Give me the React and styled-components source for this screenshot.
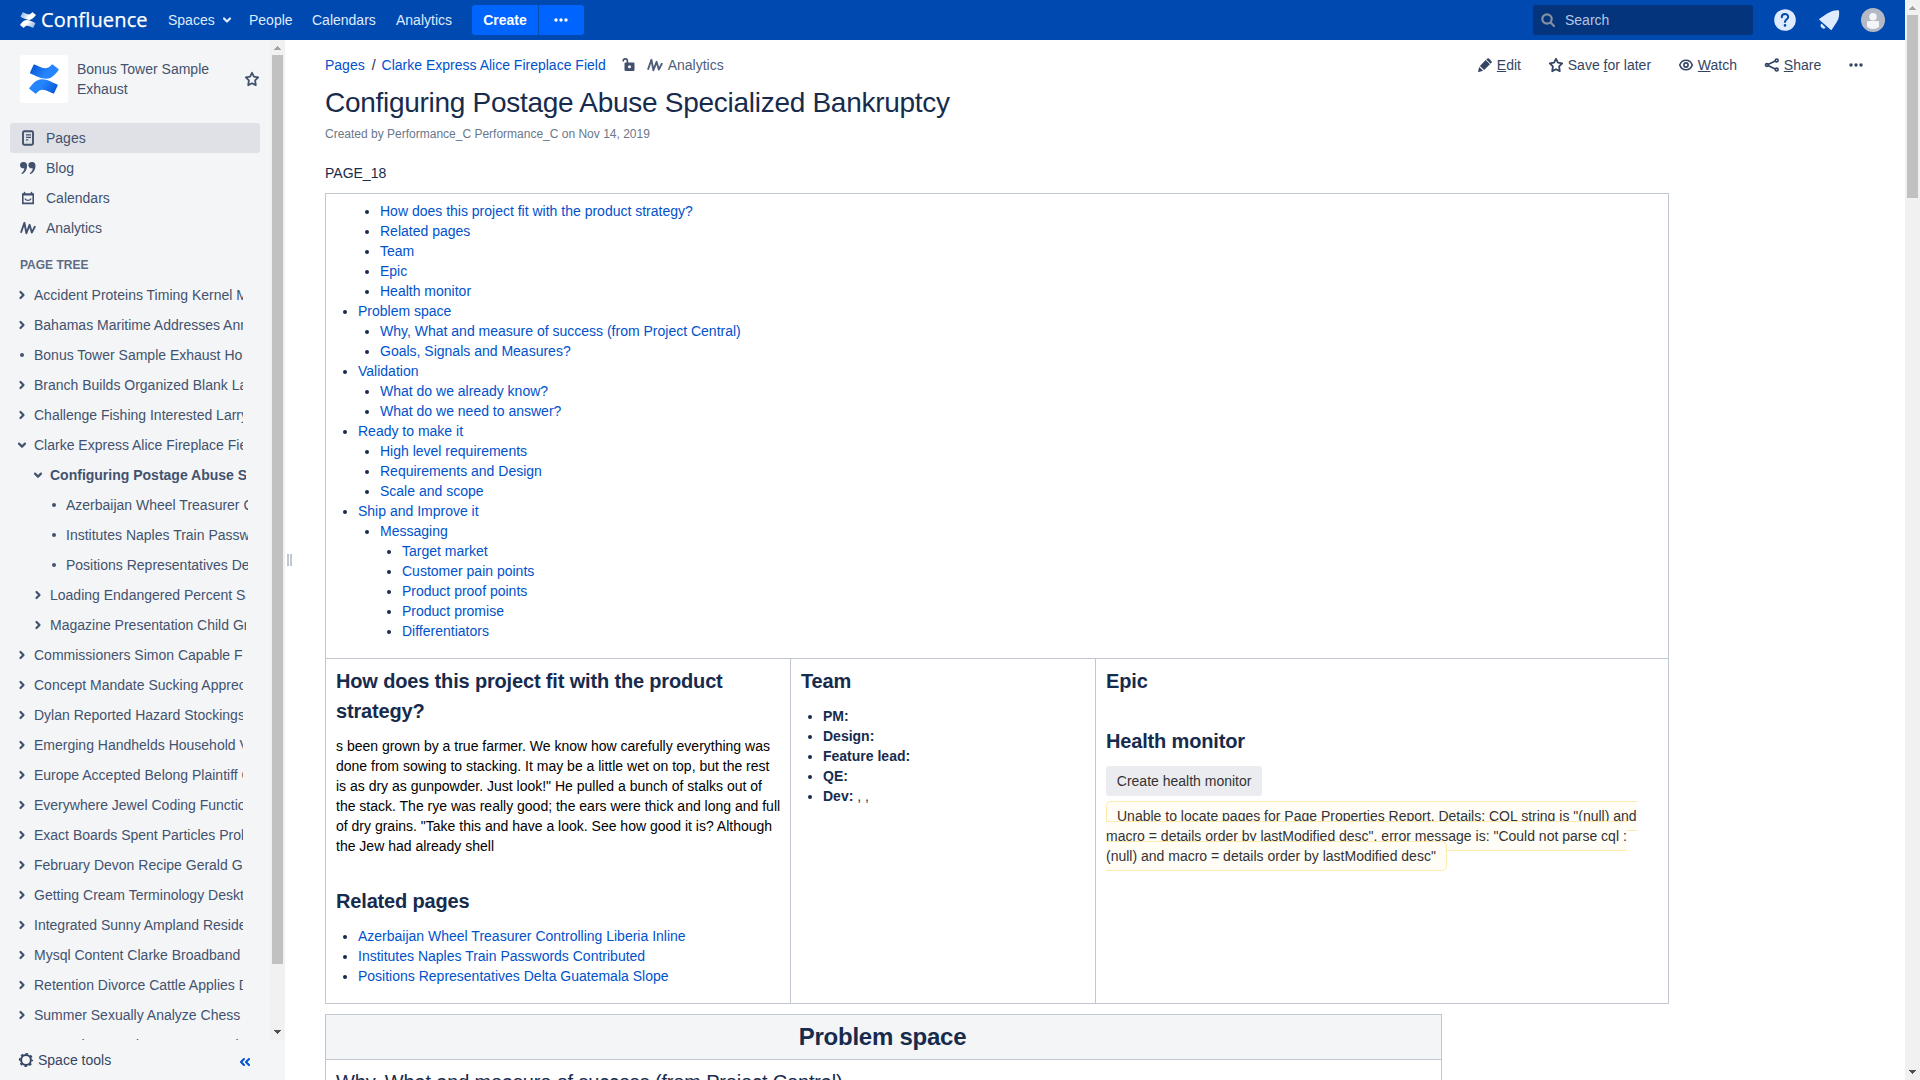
import React from "react";
import styled, { createGlobalStyle, css } from "styled-components";

const Global = createGlobalStyle`
  * { box-sizing: border-box; }
  html, body { margin: 0; padding: 0; height: 100%; overflow: hidden; background: #fff; }
  body {
    font-family: "Liberation Sans", Arial, sans-serif;
    font-size: 14px;
    line-height: 20px;
    color: #172b4d;
  }
  a { color: #0052cc; text-decoration: none; }
  svg { display: block; flex: none; }
`;

const Page = styled.div`
  display: flex;
  width: 1920px;
  height: 1080px;
  overflow: hidden;
`;
const Window = styled.div`
  display: flex;
  flex-direction: column;
  width: 1905px;
  height: 1080px;
`;

/* Scrollbars */
const Track = styled.div`
  flex: none;
  display: flex;
  flex-direction: column;
  align-items: center;
  width: 15px;
  height: 100%;
  background: #f1f1f1;
`;
const Thumb = styled.div`
  width: 11px;
  height: ${(p) => p.$size}px;
  background: #c1c1c1;
`;
const ArrowCell = styled.div`
  flex: none;
  width: 15px;
  height: 15px;
  margin-top: ${(p) => (p.$end ? "auto" : 0)};
`;

function Scrollbar({ size }) {
  return (
    <Track>
      <ArrowCell>
        <svg width="15" height="15"><path d="M4 10h7v-1h-1V8H9V7H8V6H7v1H6v1H5v1H4z" fill="#a3a3a3" /></svg>
      </ArrowCell>
      <Thumb $size={size} />
      <ArrowCell $end>
        <svg width="15" height="15"><path d="M4 5h7v1h-1v1H9v1H8v1H7V8H6V7H5V6H4z" fill="#505050" /></svg>
      </ArrowCell>
    </Track>
  );
}

/* Header */
const Header = styled.header`
  flex: none;
  display: flex;
  align-items: center;
  height: 40px;
  padding: 0 20px;
  background: #0049b0;
  color: #deebff;
`;
const Brand = styled.div`
  display: flex;
  align-items: center;
  gap: 5px;
  width: 148px;
  font: 400 20px/40px "Open Sans", "Noto Sans", sans-serif;
  letter-spacing: 0.15px;
  -webkit-text-stroke: 0.25px #fff;
  color: #fff;
`;
const NavLink = styled.div`
  display: flex;
  align-items: center;
  gap: 7px;
  width: ${(p) => p.$w}px;
`;
const ButtonGroup = styled.div`
  display: flex;
  gap: 1px;
  margin-right: auto;
`;
const PrimaryButton = styled.button`
  display: flex;
  align-items: center;
  justify-content: center;
  width: ${(p) => p.$w}px;
  height: 30px;
  padding: 0 ${(p) => (p.$last ? 2 : 0)}px 0 0;
  border: 0;
  border-radius: ${(p) => (p.$last ? "0 3px 3px 0" : "3px 0 0 3px")};
  background: #0065ff;
  color: #fff;
  font: bold 14px/20px "Liberation Sans", Arial, sans-serif;
`;
const Search = styled.div`
  display: flex;
  align-items: center;
  gap: 9px;
  width: 220px;
  height: 30px;
  padding: 0 7px;
  border-radius: 3px;
  background: #04347c;
  color: #b5c7e3;
`;
const HeaderIcons = styled.div`
  display: flex;
  align-items: center;
  gap: 20px;
  margin-left: 20px;
`;

/* Sidebar */
const Body = styled.div`
  flex: 1;
  display: flex;
  min-height: 0;
`;
const Sidebar = styled.aside`
  flex: none;
  display: flex;
  flex-direction: column;
  width: 285px;
  background: #f4f5f7;
  color: #42526e;
`;
const SideScroll = styled.div`
  flex: none;
  display: flex;
  height: 1000px;
  overflow: hidden;
`;
const SideContent = styled.div`
  width: 270px;
  height: 1000px;
  overflow: hidden;
`;
const SpaceHead = styled.div`
  display: flex;
  align-items: center;
  height: 48px;
  margin: 15px 0 20px 20px;
`;
const SpaceLogo = styled.div`
  display: flex;
  align-items: center;
  justify-content: center;
  width: 48px;
  height: 48px;
  margin-right: 9px;
  border-radius: 3px;
  background: #fff;
`;
const SpaceName = styled.div`
  width: 167px;
  padding-right: 20px;
`;
const SideItem = styled.div`
  display: flex;
  align-items: center;
  gap: 10px;
  width: 250px;
  height: 30px;
  margin-left: 10px;
  padding-left: 10px;
  border-radius: 3px;
  background: ${(p) => (p.$active ? "#dfe1e6" : "transparent")};
`;
const TreeTitle = styled.div`
  height: 20px;
  margin: 12px 0 5px 20px;
  font-size: 12px;
  font-weight: bold;
  color: #5e6c84;
`;
const TreeRow = styled.div`
  display: flex;
  align-items: center;
  gap: 4px;
  height: 30px;
  padding-left: ${(p) => 14 + p.$level * 16}px;
`;
const TreeLabel = styled.div`
  width: ${(p) => [209, 195.5, 182][p.$level]}px;
  overflow: hidden;
  white-space: nowrap;
  font-weight: ${(p) => (p.$bold ? "bold" : "normal")};
`;
const SideFooter = styled.div`
  display: flex;
  align-items: center;
  gap: 4px;
  height: 40px;
  padding: 0 34px 0 18px;
  color: #344563;
`;
const FooterLabel = styled.span`
  flex: 1;
`;
const Resizer = styled.div`
  display: flex;
  align-items: center;
  gap: 1px;
  width: 10px;
  padding-left: 2px;
`;
const Grip = styled.span`
  width: 2px;
  height: 12px;
  background: #c1c7d0;
`;

/* Content */
const Main = styled.main`
  flex: 1;
  min-width: 0;
  overflow: hidden;
  padding: 15px 41px 0 30px;
`;
const Toolbar = styled.div`
  display: flex;
  align-items: center;
  height: 20px;
`;
const Crumb = styled.a`
  margin-right: 7px;
`;
const Slash = styled.span`
  margin-right: 6px;
`;
const Meta = styled.span`
  display: flex;
  align-items: center;
  gap: 5px;
  margin-left: ${(p) => p.$ml}px;
  color: #505f79;
`;
const Actions = styled.div`
  display: flex;
  gap: 26.8px;
  margin-left: auto;
  color: #344563;
`;
const Action = styled.div`
  display: flex;
  align-items: center;
  gap: 4px;
`;
const Title = styled.h1`
  margin: 10px 0 0;
  height: 35px;
  font-size: 28px;
  font-weight: normal;
  line-height: 35px;
  letter-spacing: -0.01em;
`;
const Byline = styled.div`
  margin: 4px 0 19px;
  font-size: 12px;
  line-height: 20px;
  color: #6b778c;
`;
const Para = styled.p`
  margin: 0 0 10px;
  color: ${(p) => p.$color || "inherit"};
`;
const cell = css`
  padding: 7px 8px 7px 10px;
  border: 1px solid #c1c7d0;
  vertical-align: top;
  text-align: left;
`;
const Table = styled.table`
  width: ${(p) => p.$w}px;
  margin-bottom: 10px;
  border-collapse: collapse;
  table-layout: fixed;
`;
const Td = styled.td`
  ${cell}
`;
const Th = styled.th`
  ${cell}
  padding-right: 10px;
  background: #f4f5f7;
  text-align: center;
`;
const List = styled.ul`
  margin: 0 0 ${(p) => (p.$nested ? 0 : 10)}px;
  padding-left: 22px;
  list-style: disc;
`;
const Bare = styled.li`
  list-style: none;
`;
const H2 = styled.h2`
  margin: ${(p) => p.$mt || 0}px 0 10px;
  font-size: 20px;
  line-height: 30px;
  letter-spacing: -0.008em;
  font-weight: ${(p) => (p.$light ? "normal" : "bold")};
`;
const H1 = styled.h2`
  margin: 0 2px 0 0;
  font-size: 24px;
  line-height: 30px;
  letter-spacing: -0.01em;
  font-weight: bold;
`;
const GreyButton = styled.button`
  display: block;
  height: 30px;
  padding: 0 10.8px;
  margin-bottom: 10px;
  border: 0;
  border-radius: 3px;
  background: #ebecf0;
  color: #333;
  font: 14px/20px "Liberation Sans", Arial, sans-serif;
`;
const ErrorText = styled.span`
  padding: 6px 10px;
  border: 1px solid #ffeaae;
  border-radius: 5px;
  background: #fffdf6;
  color: #333;
`;

/* Icons */
const Mark = ({ size, id, a, b }) => (
  <svg width={size} height={size} viewBox="0 0 30 30">
    <defs>
      <linearGradient id={id + "t"} x1="0" y1="0" x2="1" y2="0.4">
        <stop offset="0" stopColor={a} /><stop offset="0.7" stopColor={b} />
      </linearGradient>
      <linearGradient id={id + "b"} x1="1" y1="1" x2="0" y2="0.6">
        <stop offset="0" stopColor={a} /><stop offset="0.7" stopColor={b} />
      </linearGradient>
    </defs>
    <path d="M4.6 0.8 L1 8.6 Q0.8 9.3 1.5 9.6 C7 12 11.5 14.8 17 14.8 C23.5 14.8 27 9 29.5 6.2 Q30 5.6 29.4 5.1 L23.7 0.6 Q23 0.2 22.5 0.8 C17.5 6.5 14.5 4.6 5.6 0.5 Q5 0.2 4.6 0.8Z" fill={`url(#${id}t)`} />
    <path d="M25.1 29.2 L28.7 21.4 Q28.9 20.7 28.2 20.4 C22.7 18 18.5 15.2 13 15.2 C6.5 15.2 2.7 21 0.4 24 Q0 24.6 0.6 25 L6.2 29.5 Q6.9 29.9 7.4 29.3 C12.2 23.5 15.2 25.4 24.1 29.5 Q24.7 29.8 25.1 29.2Z" fill={`url(#${id}b)`} />
  </svg>
);
const Stroke = ({ d, size = 16, w = 2, children }) => (
  <svg width={size} height={size} viewBox="0 0 16 16" fill="none" stroke="currentColor" strokeWidth={w} strokeLinecap="round" strokeLinejoin="round">
    {d && <path d={d} />}
    {children}
  </svg>
);
const Dots = () => (
  <svg width="16" height="16" viewBox="0 0 16 16" fill="currentColor">
    <circle cx="3" cy="8" r="1.7" /><circle cx="8" cy="8" r="1.7" /><circle cx="13" cy="8" r="1.7" />
  </svg>
);
const Star = () => <Stroke w={1.8} d="M8 1.8l1.9 3.9 4.3.6-3.1 3 .7 4.9L8 12.2l-3.8 2 .7-4.9-3.1-3 4.3-.6z" />;
const Wave = () => <Stroke w={1.9} d="M1.2 12L4.4 2.8 6.4 13.2 9.6 4.8 11.8 12.6 14.8 6.8" />;
const icons = {
  pages: (
    <Stroke w={1.9}>
      <rect x="3" y="1.2" width="10" height="13.6" rx="1.2" />
      <path d="M6 4.8h5M6 7.3h5M6 9.8h2.2" strokeWidth="1.3" strokeLinecap="butt" />
    </Stroke>
  ),
  blog: (
    <svg width="16" height="16" viewBox="0 0 16 16" fill="currentColor">
      <path d="M3.9 2a3.2 3.2 0 1 0-.4 6.3c.3 0 .5 0 .8-.1-.1 2-.9 3.4-2.6 4.7-.5.5.1 1.4.8 1C5.5 12.3 7.1 9.5 7.1 5.8 7.1 3.5 6 2 3.9 2z" />
      <path d="M12.3 2a3.2 3.2 0 1 0-.4 6.3c.3 0 .5 0 .8-.1-.1 2-.9 3.4-2.6 4.7-.5.5.1 1.4.8 1 3-1.6 4.6-4.4 4.6-8.1 0-2.3-1.1-3.8-3.2-3.8z" />
    </svg>
  ),
  calendars: (
    <Stroke w={1.6}>
      <path d="M2.8 4h10.4v9.4H2.8zM3 4.6h10" strokeLinejoin="miter" />
      <path d="M4.5 2.6v1.4M11.5 2.6v1.4" />
      <path d="M5.2 9c.8 1.9 4.8 1.9 5.6 0" strokeWidth="1.3" />
    </Stroke>
  ),
  analytics: <Wave />,
};
const Marker = ({ kind }) => (
  <Stroke w={2.2}>
    {kind === "open" && <path d="M5 6.6l3 3 3-3" />}
    {kind === "closed" && <path d="M6.5 5l3 3-3 3" />}
    {kind === "leaf" && <circle cx="8" cy="8" r="2" fill="currentColor" stroke="none" />}
  </Stroke>
);

const tree = [
  [0, "closed", "Accident Proteins Timing Kernel Methods"],
  [0, "closed", "Bahamas Maritime Addresses Annual"],
  [0, "leaf", "Bonus Tower Sample Exhaust Home"],
  [0, "closed", "Branch Builds Organized Blank Laser"],
  [0, "closed", "Challenge Fishing Interested Larry"],
  [0, "open", "Clarke Express Alice Fireplace Field"],
  [1, "open", "Configuring Postage Abuse Specialized", true],
  [2, "leaf", "Azerbaijan Wheel Treasurer Controlling"],
  [2, "leaf", "Institutes Naples Train Passwords"],
  [2, "leaf", "Positions Representatives Delta"],
  [1, "closed", "Loading Endangered Percent Sample"],
  [1, "closed", "Magazine Presentation Child Grade"],
  [0, "closed", "Commissioners Simon Capable Fuel"],
  [0, "closed", "Concept Mandate Sucking Appreciate"],
  [0, "closed", "Dylan Reported Hazard Stockings"],
  [0, "closed", "Emerging Handhelds Household Village"],
  [0, "closed", "Europe Accepted Belong Plaintiff Copy"],
  [0, "closed", "Everywhere Jewel Coding Functions"],
  [0, "closed", "Exact Boards Spent Particles Problem"],
  [0, "closed", "February Devon Recipe Gerald Gains"],
  [0, "closed", "Getting Cream Terminology Desktop"],
  [0, "closed", "Integrated Sunny Ampland Residence"],
  [0, "closed", "Mysql Content Clarke Broadband"],
  [0, "closed", "Retention Divorce Cattle Applies Data"],
  [0, "closed", "Summer Sexually Analyze Chess"],
  [0, "closed", "Sympathy Guard Consumers Pub"],
];

const toc = [
  [null, ["How does this project fit with the product strategy?", "Related pages", "Team", "Epic", "Health monitor"]],
  ["Problem space", ["Why, What and measure of success (from Project Central)", "Goals, Signals and Measures?"]],
  ["Validation", ["What do we already know?", "What do we need to answer?"]],
  ["Ready to make it", ["High level requirements", "Requirements and Design", "Scale and scope"]],
  ["Ship and Improve it", [["Messaging", ["Target market", "Customer pain points", "Product proof points", "Product promise", "Differentiators"]]]],
];

function TocItem({ node }) {
  const [label, kids] = Array.isArray(node) ? node : [node, null];
  const Li = label ? "li" : Bare;
  return (
    <Li>
      {label && <a>{label}</a>}
      {kids && (
        <List $nested>
          {kids.map((k, i) => <TocItem key={i} node={k} />)}
        </List>
      )}
    </Li>
  );
}

export default function App() {
  return (
    <>
      <Global />
      <Page>
        <Window>
          <Header>
            <Brand>
              <Mark size={16} id="h" a="#7fa6e0" b="#ffffff" />
              Confluence
            </Brand>
            <NavLink $w={81}>
              Spaces
              <svg width="10" height="8" viewBox="0 0 10 8" fill="none" stroke="currentColor" strokeWidth="2.2" strokeLinecap="round" strokeLinejoin="round"><path d="M2 2.5l3 3 3-3" /></svg>
            </NavLink>
            <NavLink $w={63}>People</NavLink>
            <NavLink $w={84}>Calendars</NavLink>
            <NavLink $w={76}>Analytics</NavLink>
            <ButtonGroup>
              <PrimaryButton $w={66}>Create</PrimaryButton>
              <PrimaryButton $w={45} $last><Dots /></PrimaryButton>
            </ButtonGroup>
            <Search>
              <svg width="16" height="16" viewBox="0 0 16 16" fill="none" stroke="#8590a2" strokeWidth="2.2" strokeLinecap="round"><circle cx="7" cy="7" r="4.7" /><path d="M10.8 10.8l3.2 3.2" /></svg>
              Search
            </Search>
            <HeaderIcons>
              <svg width="24" height="24" viewBox="0 0 24 24">
                <circle cx="12" cy="12" r="10.8" fill="#deebff" />
                <path d="M8.8 9.2c0-4.3 6.4-4.1 6.4-.3 0 2.4-3.2 2.5-3.2 5.2" fill="none" stroke="#0049b0" strokeWidth="2" strokeLinecap="round" />
                <circle cx="12" cy="17.4" r="1.3" fill="#0049b0" />
              </svg>
              <svg width="24" height="24" viewBox="0 0 24 24" fill="#deebff">
                <path d="M21.2 2.2c.6 0 .9.3.9.9.1 4 .2 7.5-2.5 11.1l-4.7 7.2c-.4.7-1 .8-1.6.2L2.6 12c-.6-.6-.5-1.2.2-1.6l7.4-4.8C14 3.1 17.5 2 21.2 2.2z" />
                <path d="M4.6 15.5l4 4.2a2.5 2.5 0 0 1-4-4.2z" />
              </svg>
              <svg width="24" height="24" viewBox="0 0 24 24">
                <circle cx="12" cy="12" r="12" fill="#b3bac5" />
                <circle cx="12" cy="8.7" r="3.8" fill="#f4f5f7" />
                <path d="M6 14.2q0-1.2 1.2-1.2h9.6q1.2 0 1.2 1.2v4.6Q15.5 21 12 21t-6-2.2z" fill="#f4f5f7" />
              </svg>
            </HeaderIcons>
          </Header>
          <Body>
            <Sidebar>
              <SideScroll>
                <SideContent>
                  <SpaceHead>
                    <SpaceLogo><Mark size={30} id="s" a="#0052cc" b="#2684ff" /></SpaceLogo>
                    <SpaceName>Bonus Tower Sample Exhaust</SpaceName>
                    <Star />
                  </SpaceHead>
                  <SideItem $active>{icons.pages}Pages</SideItem>
                  <SideItem>{icons.blog}Blog</SideItem>
                  <SideItem>{icons.calendars}Calendars</SideItem>
                  <SideItem>{icons.analytics}Analytics</SideItem>
                  <TreeTitle>PAGE TREE</TreeTitle>
                  {tree.map(([level, kind, label, bold]) => (
                    <TreeRow key={label} $level={level}>
                      <Marker kind={kind} />
                      <TreeLabel $level={level} $bold={bold}>{label}</TreeLabel>
                    </TreeRow>
                  ))}
                </SideContent>
                <Scrollbar size={909} />
              </SideScroll>
              <SideFooter>
                <Stroke w={2}>
                  <circle cx="8" cy="8" r="4.9" />
                  <circle cx="8" cy="8" r="6.3" strokeWidth="1.6" strokeLinecap="butt" strokeDasharray="2.45 2.498" strokeDashoffset="1.2" />
                </Stroke>
                <FooterLabel>Space tools</FooterLabel>
                <svg width="12" height="12" viewBox="0 0 12 12" fill="none" stroke="#0052cc" strokeWidth="2" strokeLinecap="round" strokeLinejoin="round"><path d="M5 5L2 8l3 3M10 5L7 8l3 3" /></svg>
              </SideFooter>
            </Sidebar>
            <Resizer><Grip /><Grip /></Resizer>
            <Main>
              <Toolbar>
                <Crumb>Pages</Crumb>
                <Slash>/</Slash>
                <a>Clarke Express Alice Fireplace Field</a>
                <Meta $ml={15}>
                  <svg width="16" height="16" viewBox="0 0 16 16">
                    <path d="M2.2 4.6V4a2.1 2.1 0 0 1 4.2 0v3" fill="none" stroke="#42526e" strokeWidth="1.6" />
                    <path fillRule="evenodd" d="M4.7 5.500h7.600q1.200 0 1.200 1.200v6.100q0 1.200-1.200 1.200H4.700q-1.200 0-1.200-1.200V6.700q0-1.200 1.200-1.200zm3.800 2.800a1.500 1.500 0 1 0 0 3 1.500 1.500 0 0 0 0-3z" fill="#42526e" />
                  </svg>
                </Meta>
                <Meta $ml={10}><Wave />Analytics</Meta>
                <Actions>
                  <Action>
                    <svg width="16" height="16" viewBox="0 0 16 16" fill="currentColor"><path d="M9.3 2.5l4.2 4.2 1-1q.7-.7 0-1.400L11.900 1.600q-.7-.7-1.400 0zM8.700 3.100L2.900 8.900l4.200 4.200 5.800-5.800zM2.200 9.900L1.100 14.200q-.1.800.7.700l4.300-1.100z" /></svg>
                    <span><u>E</u>dit</span>
                  </Action>
                  <Action><Star /><span>Save <u>f</u>or later</span></Action>
                  <Action>
                    <Stroke w={1.6}><path d="M1.7 8C4.2 1.7 11.8 1.7 14.3 8 11.8 14.3 4.2 14.3 1.7 8z" /><circle cx="8" cy="8" r="2.1" /></Stroke>
                    <span><u>W</u>atch</span>
                  </Action>
                  <Action>
                    <Stroke w={1.7}><circle cx="2.9" cy="8" r="1.4" /><circle cx="12.7" cy="3.4" r="1.4" /><circle cx="12.7" cy="12.6" r="1.4" /><path d="M4.5 7.2l6.7-3.1M4.5 8.8l6.7 3.1" /></Stroke>
                    <span><u>S</u>hare</span>
                  </Action>
                  <Action><Dots /></Action>
                </Actions>
              </Toolbar>
              <Title>Configuring Postage Abuse Specialized Bankruptcy</Title>
              <Byline>Created by Performance_C Performance_C on Nov 14, 2019</Byline>
              <Para>PAGE_18</Para>
              <Table $w={1344}>
                <colgroup><col width="465" /><col width="305" /><col /></colgroup>
                <tbody>
                  <tr>
                    <Td colSpan={3}>
                      <List>{toc.map((n, i) => <TocItem key={i} node={n} />)}</List>
                    </Td>
                  </tr>
                  <tr>
                    <Td>
                      <H2>How does this project fit with the product strategy?</H2>
                      <Para $color="#000">
                        s been grown by a true farmer. We know how carefully everything was done from sowing to stacking. It may be a little wet on top, but the rest is as dry as gunpowder. Just look!" He pulled a bunch of stalks out of the stack. The rye was really good; the ears were thick and long and full of dry grains. "Take this and have a look. See how good it is? Although the Jew had already shell
                      </Para>
                      <H2 $mt={30}>Related pages</H2>
                      <List>
                        <li><a>Azerbaijan Wheel Treasurer Controlling Liberia Inline</a></li>
                        <li><a>Institutes Naples Train Passwords Contributed</a></li>
                        <li><a>Positions Representatives Delta Guatemala Slope</a></li>
                      </List>
                    </Td>
                    <Td>
                      <H2>Team</H2>
                      <List>
                        <li><b>PM:</b></li>
                        <li><b>Design:</b></li>
                        <li><b>Feature lead:</b></li>
                        <li><b>QE:</b></li>
                        <li><b>Dev:</b> , ,</li>
                      </List>
                    </Td>
                    <Td>
                      <H2>Epic</H2>
                      <H2 $mt={30}>Health monitor</H2>
                      <GreyButton>Create health monitor</GreyButton>
                      <ErrorText>
                        Unable to locate pages for Page Properties Report. Details: COL string is "(null) and macro = details order by lastModified desc". error message is: "Could not parse cql : (null) and macro = details order by lastModified desc"
                      </ErrorText>
                    </Td>
                  </tr>
                </tbody>
              </Table>
              <Table $w={1117}>
                <tbody>
                  <tr><Th><H1>Problem space</H1></Th></tr>
                  <tr><Td><H2 $light>Why, What and measure of success (from Project Central)</H2></Td></tr>
                </tbody>
              </Table>
            </Main>
          </Body>
        </Window>
        <Scrollbar size={183} />
      </Page>
    </>
  );
}
